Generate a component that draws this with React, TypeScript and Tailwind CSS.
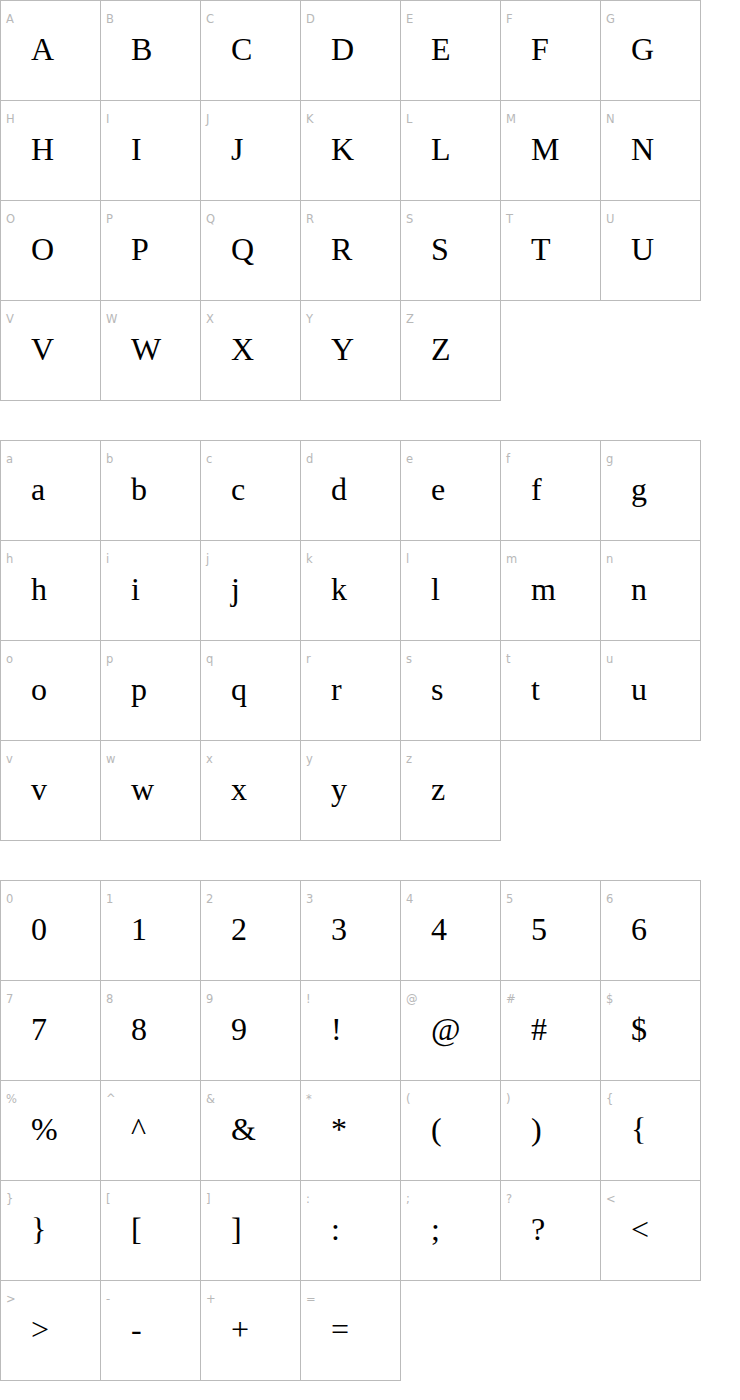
const upper = 'ABCDEFGHIJKLMNOPQRSTUVWXYZ'.split('');
const lower = 'abcdefghijklmnopqrstuvwxyz'.split('');
const other = '0123456789!@#$%^&*(){}[]:;?<>-+='.split('');

const Cell = ({ ch }: { ch: string }) => (
  <div className="w-[101px] h-[101px] border border-[#bbbbbb] bg-white flex flex-col">
    <div className="pl-[5px] pt-[11px] text-[11.5px] leading-[14px] text-[#b8b8b8] font-['DejaVu_Sans',sans-serif]">
      {ch}
    </div>
    <div className="pl-[30px] mt-[7px] text-[32px] leading-none text-black font-['Liberation_Serif',serif]">
      {ch}
    </div>
  </div>
);

const Section = ({ chars }: { chars: string[] }) => (
  <div className="grid grid-cols-[repeat(7,100px)] auto-rows-[100px] mb-[40px]">
    {chars.map((c) => (
      <Cell key={c} ch={c} />
    ))}
  </div>
);

export default function App() {
  return (
    <div className="w-[740px] min-h-[1400px] bg-white">
      <Section chars={upper} />
      <Section chars={lower} />
      <Section chars={other} />
    </div>
  );
}
